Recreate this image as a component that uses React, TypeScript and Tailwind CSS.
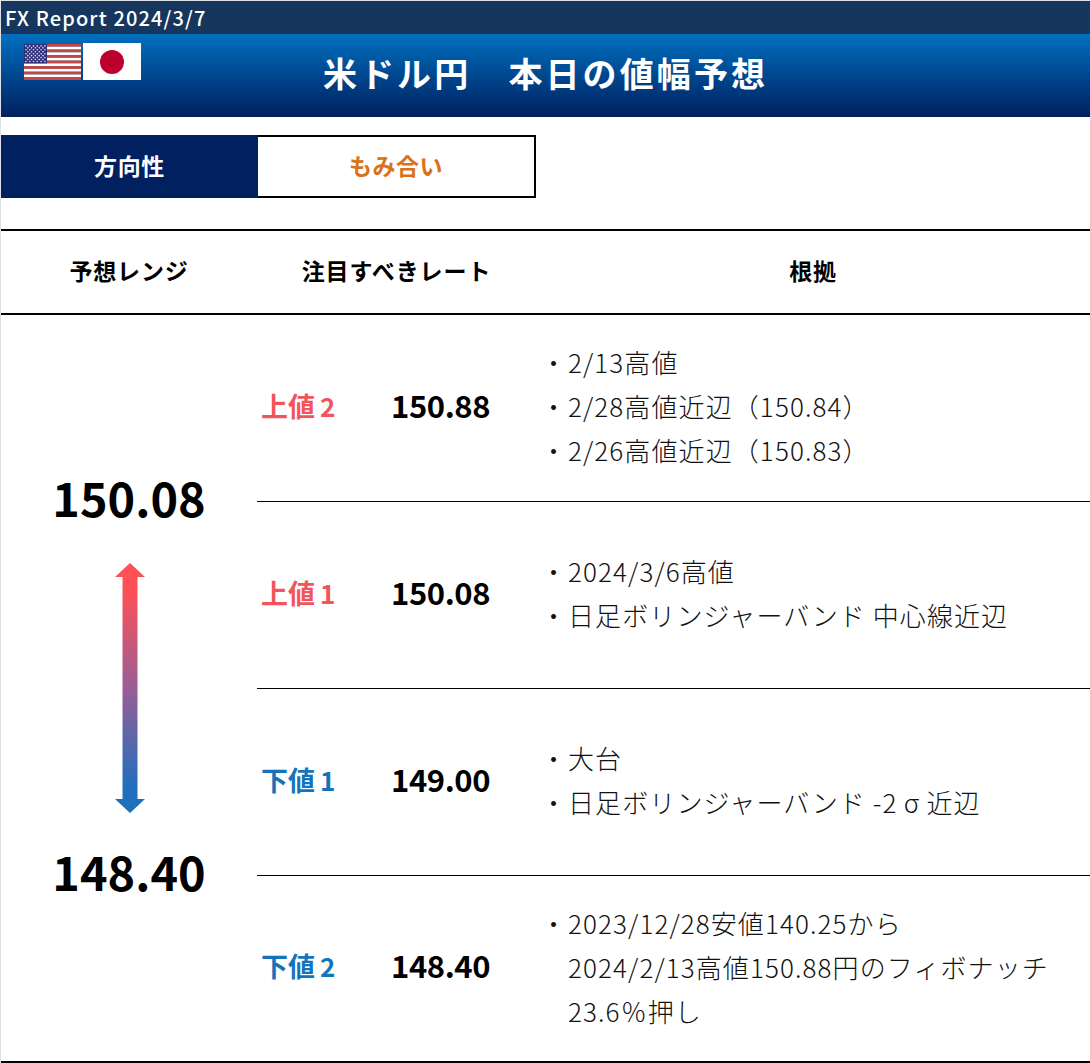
const jp = { fontFamily: '"Noto Sans CJK JP", "Noto Sans", sans-serif' };

function UsFlag() {
  const stripes = Array.from({ length: 13 }, (_, i) => i);
  const stars: [number, number][] = [];
  for (let r = 0; r < 9; r++) {
    const n = r % 2 === 0 ? 6 : 5;
    for (let c = 0; c < n; c++) {
      stars.push([(r % 2 === 0 ? 1.9 : 3.8) + c * 3.8, 1.9 + r * 1.95]);
    }
  }
  return (
    <svg width="57" height="36" viewBox="0 0 57 36" preserveAspectRatio="none" className="block">
      {stripes.map((i) => (
        <rect key={i} x="0" y={(i * 36) / 13} width="57" height={36 / 13} fill={i % 2 === 0 ? "#c8443f" : "#ffffff"} />
      ))}
      <rect x="0" y="0" width="23" height="19.4" fill="#2f2f78" />
      {stars.map(([x, y], i) => (
        <circle key={i} cx={x} cy={y} r="0.8" fill="#e6e6f4" />
      ))}
    </svg>
  );
}

function JpFlag() {
  return (
    <div className="w-[58px] h-[37px] bg-white flex items-center justify-center">
      <div className="w-[24px] h-[24px] rounded-full bg-[#bc002d]" />
    </div>
  );
}

function Arrow() {
  return (
    <svg width="32" height="252" viewBox="0 0 32 252" className="block">
      <defs>
        <linearGradient id="arrowGrad" x1="0" y1="0" x2="0" y2="1">
          <stop offset="0.1" stopColor="#ff5056" />
          <stop offset="0.5" stopColor="#9a5e96" />
          <stop offset="0.9" stopColor="#1f6fbd" />
        </linearGradient>
      </defs>
      <path
        d="M16 1 L31 15 L23.5 15 L23.5 237 L31 237 L16 251 L1 237 L8.5 237 L8.5 15 L1 15 Z"
        fill="url(#arrowGrad)"
      />
    </svg>
  );
}

type Line = { text: React.ReactNode; bullet: boolean };
type Row = { label: string; num: string; value: string; up: boolean; lines: Line[]; border: string };

const rows: Row[] = [
  {
    label: "上値",
    num: "2",
    value: "150.88",
    up: true,
    border: "h-[187px] border-b border-black",
    lines: [
      { text: "2/13高値", bullet: true },
      { text: "2/28高値近辺（150.84）", bullet: true },
      { text: "2/26高値近辺（150.83）", bullet: true },
    ],
  },
  {
    label: "上値",
    num: "1",
    value: "150.08",
    up: true,
    border: "h-[187px] border-b border-black",
    lines: [
      { text: "2024/3/6高値", bullet: true },
      { text: "日足ボリンジャーバンド 中心線近辺", bullet: true },
    ],
  },
  {
    label: "下値",
    num: "1",
    value: "149.00",
    up: false,
    border: "h-[187px] border-b border-black",
    lines: [
      { text: "大台", bullet: true },
      {
        text: (
          <>
            日足ボリンジャーバンド -2<span className="inline-block w-[29px] text-center">σ</span>近辺
          </>
        ),
        bullet: true,
      },
    ],
  },
  {
    label: "下値",
    num: "2",
    value: "148.40",
    up: false,
    border: "h-[185px]",
    lines: [
      { text: "2023/12/28安値140.25から", bullet: true },
      { text: "2024/2/13高値150.88円のフィボナッチ", bullet: false },
      { text: "23.6％押し", bullet: false },
    ],
  },
];

export default function App() {
  return (
    <div className="w-[1090px] h-[1063px] bg-white overflow-hidden border-l border-t border-[#dde1e6] text-black" style={jp}>
      <div className="h-[33px] bg-[#17365d] text-white text-[20px] leading-[33px] pl-[4px] font-medium tracking-[1.15px]">
        FX Report 2024/3/7
      </div>
      <div className="h-[83px] bg-gradient-to-b from-[#0070c0] to-[#002060] grid grid-cols-[1fr_auto_1fr]">
        <div className="flex items-start gap-[2px] pl-[23px] pt-[9px]">
          <div className="pt-[1px]">
            <UsFlag />
          </div>
          <JpFlag />
        </div>
        <div className="text-white text-[34px] font-bold leading-[78px] tracking-[3.1px] whitespace-pre">米ドル円　本日の値幅予想</div>
        <div />
      </div>

      <div className="flex mt-[18px] h-[63px] w-[535px]">
        <div className="w-[257px] bg-[#002060] text-white font-bold text-[23px] tracking-[0.7px] pb-[3px] flex items-center justify-center">方向性</div>
        <div className="flex-1 border-2 border-l-0 border-black text-[#d9721a] font-bold text-[23px] tracking-[0.5px] pb-[3px] flex items-center justify-center">もみ合い</div>
      </div>

      <div className="mt-[31px] border-y-2 border-black h-[86px] pb-[3px] grid grid-cols-[256px_279px_1fr] items-center font-bold text-[23px] tracking-[0.8px]">
        <div className="text-center">予想レンジ</div>
        <div className="text-center tracking-[0.9px]">注目すべきレート</div>
        <div className="text-center">根拠</div>
      </div>

      <div className="flex">
        <div className="w-[256px] h-[746px] flex flex-col items-center font-bold">
          <div className="text-[46.8px] leading-[60px] mt-[152px]">150.08</div>
          <div className="mt-[35px] ml-[1px]">
            <Arrow />
          </div>
          <div className="text-[46.8px] leading-[60px] mt-[27px]">148.40</div>
        </div>
        <div className="flex-1">
          {rows.map((r) => (
            <div key={r.label + r.num} className={`flex items-center pb-[6px] ${r.border}`}>
              <div className={`w-[134px] pl-[4px] pt-[2px] text-[27px] font-bold ${r.up ? "text-[#f2545b]" : "text-[#1474bb]"}`}>
                {r.label}
                <span className="text-[26px] ml-[5px]">{r.num}</span>
              </div>
              <div className="w-[148px] text-[31px] font-bold tracking-[-0.4px]">{r.value}</div>
              <div className="flex-1 pt-[2px] text-[26px] leading-[44px] font-light text-[#111] tracking-[1.1px] whitespace-nowrap">
                {r.lines.map((l, i) => (
                  <div key={i} className="flex">
                    <span className="w-[29px] text-center tracking-normal">{l.bullet ? "・" : ""}</span>
                    <span>{l.text}</span>
                  </div>
                ))}
              </div>
            </div>
          ))}
        </div>
      </div>
      <div className="border-t-2 border-black" />
    </div>
  );
}
